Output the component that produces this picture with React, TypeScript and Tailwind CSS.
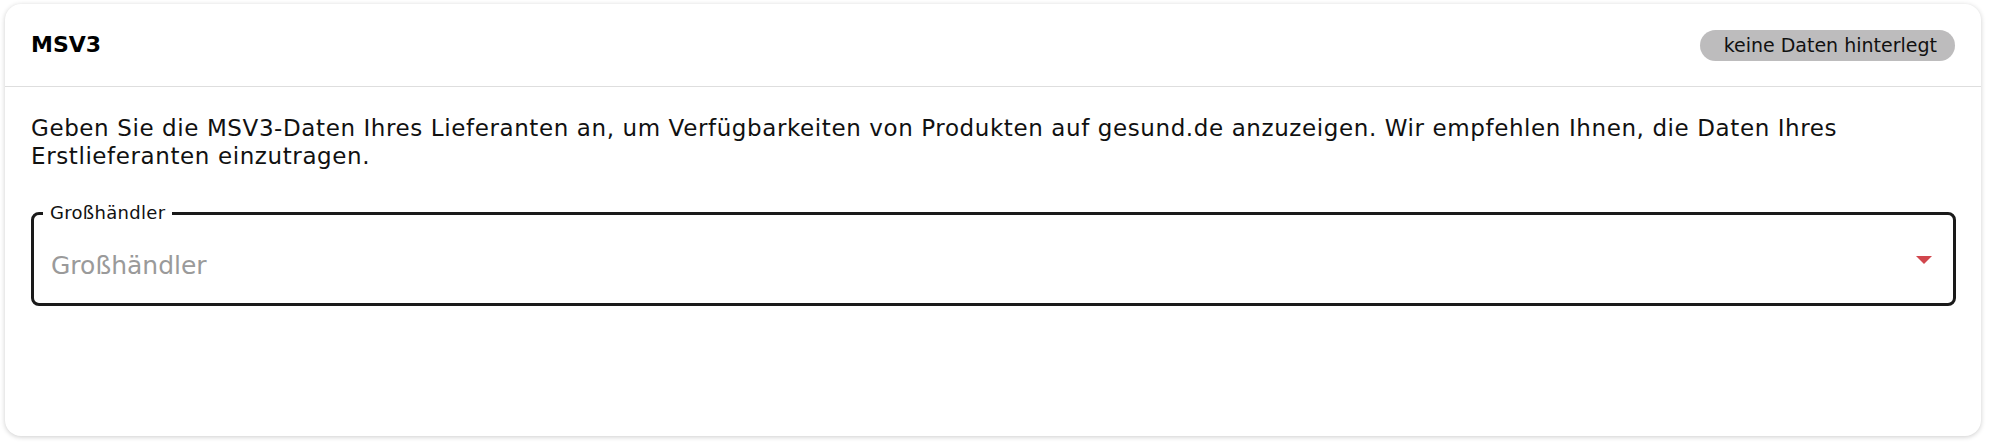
import React from "react";

export default function App() {
  return (
    <div
      className="w-full h-[446px] bg-white pt-[4px] pl-[5px] pr-[11px]"
      style={{ fontFamily: "'DejaVu Sans', 'Noto Sans', sans-serif" }}
    >
      <div className="h-[432px] rounded-[16px] bg-white shadow-[0_1px_5px_rgba(0,0,0,0.2)] flex flex-col">
        <div className="h-[83px] shrink-0 flex items-center justify-between pl-[26px] pr-[26px] border-b border-[#dedede]">
          <h2 className="text-[22px] font-bold text-black leading-none">MSV3</h2>
          <span className="h-[31px] flex items-center rounded-full bg-[#bdbcbd] pl-[24px] pr-[18px] text-[19px] text-[#111]">
            keine Daten hinterlegt
          </span>
        </div>
        <div className="pl-[26px] pr-[25px] pt-[27px]">
          <p className="text-[23px] leading-[28px] tracking-[0.6px] text-[#111]">
            Geben Sie die MSV3-Daten Ihres Lieferanten an, um Verfügbarkeiten von Produkten auf gesund.de anzuzeigen. Wir empfehlen Ihnen, die Daten Ihres Erstlieferanten einzutragen.
          </p>
          <div className="relative mt-[42px] h-[94px] rounded-[8px] border-[3px] border-[#1a1a1a] flex items-center justify-between pl-[17px] pr-[21px]">
            <span className="absolute left-[9px] top-[-13px] bg-white px-[7px] text-[18px] leading-[22px] tracking-[0.3px] text-[#111]">
              Großhändler
            </span>
            <span className="text-[25px] text-[#9a9a9a] mt-[14px]">Großhändler</span>
            <svg width="16" height="8" viewBox="0 0 16 8" className="mt-[2px]">
              <path d="M0 0 L16 0 L8 8 Z" fill="#d1464d" />
            </svg>
          </div>
        </div>
      </div>
    </div>
  );
}
